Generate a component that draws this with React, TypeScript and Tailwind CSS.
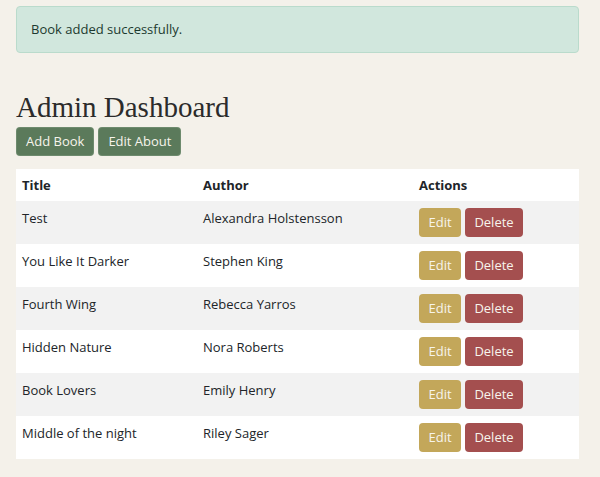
import React from "react";

interface Book {
  title: string;
  author: string;
}

const books: Book[] = [
  { title: "Test", author: "Alexandra Holstensson" },
  { title: "You Like It Darker", author: "Stephen King" },
  { title: "Fourth Wing", author: "Rebecca Yarros" },
  { title: "Hidden Nature", author: "Nora Roberts" },
  { title: "Book Lovers", author: "Emily Henry" },
  { title: "Middle of the night", author: "Riley Sager" },
];

const App: React.FC = () => {
  return (
    <div
      className="min-h-[477px] bg-[#f4f1ea] pl-4 pr-[21px] pt-[6px] text-[#212529]"
      style={{ fontFamily: '"Open Sans", "Liberation Sans", sans-serif' }}
    >
      {/* Message flash */}
      <div className="h-[47px] flex items-center px-[14px] rounded-[4px] border border-[#badbcc] bg-[#d1e7dd] text-[13px] text-[#1c3a2f]">
        Book added successfully.
      </div>

      <h1
        className="mt-[36px] text-[29px] leading-[36px] text-[#2b2b2b]"
        style={{ fontFamily: '"Liberation Serif", "DejaVu Serif", serif' }}
      >
        Admin Dashboard
      </h1>

      <div className="flex gap-1 mt-[2px]">
        <button className="h-[29px] px-[9px] rounded-[4px] bg-[#5b7a5b] text-[#f7f4ec] text-[13px] border border-[#8aa38a]/40">
          Add Book
        </button>
        <button className="h-[29px] px-[9px] rounded-[4px] bg-[#5b7a5b] text-[#f7f4ec] text-[13px] border border-[#8aa38a]/40">
          Edit About
        </button>
      </div>

      <table className="mt-[13px] w-full border-collapse text-[13px] bg-white">
        <thead>
          <tr className="h-[32px]">
            <th className="w-[181px] text-left font-bold px-[6px] pt-[2px]">Title</th>
            <th className="w-[216px] text-left font-bold px-[6px] pt-[2px]">Author</th>
            <th className="text-left font-bold px-[6px] pt-[2px]">Actions</th>
          </tr>
        </thead>
        <tbody>
          {books.map((b, i) => (
            <tr
              key={b.title}
              className={i % 2 === 0 ? "bg-[#f2f2f2]" : "bg-white"}
            >
              <td className="align-top px-[6px] pt-[8px] pb-[7px]">{b.title}</td>
              <td className="align-top px-[6px] pt-[8px] pb-[7px]">{b.author}</td>
              <td className="align-top px-[6px] py-[7px]">
                <div className="flex gap-1">
                  <button className="h-[29px] w-[42px] rounded-[4px] bg-[#c3a75a] text-[#f7f4ec] text-[13px]">
                    Edit
                  </button>
                  <button className="h-[29px] w-[58px] rounded-[4px] bg-[#a44f4f] text-[#f7f4ec] text-[13px]">
                    Delete
                  </button>
                </div>
              </td>
            </tr>
          ))}
        </tbody>
      </table>
    </div>
  );
};

export default App;
